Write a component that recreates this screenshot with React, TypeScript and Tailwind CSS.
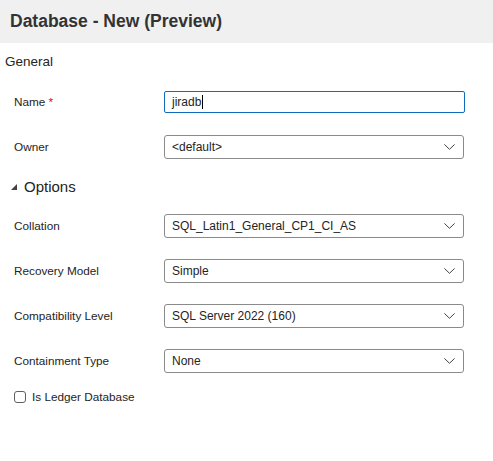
const Chevron = () => (
  <svg width="11" height="6" viewBox="0 0 11 6" className="shrink-0 text-[#424242]">
    <path d="M0.7 0.7l4.8 4.6 4.8-4.6" fill="none" stroke="currentColor" strokeWidth="1" strokeLinecap="round" strokeLinejoin="round" />
  </svg>
);

const Row = ({ label, children, className = "" }: { label: React.ReactNode; children: React.ReactNode; className?: string }) => (
  <div className={`flex items-center ${className}`}>
    <div className="w-[164px] shrink-0 pl-[14px] text-[11.75px] text-[#242424]">{label}</div>
    {children}
  </div>
);

const Select = ({ value }: { value: string }) => (
  <div className="flex h-[24px] w-[300px] items-center justify-between rounded-[3px] border border-[#8a8a8a] pl-[7px] pr-[8px] text-[12px] text-[#242424]">
    <span>{value}</span>
    <Chevron />
  </div>
);

export default function App() {
  return (
    <div className="h-[461px] w-[493px] bg-white font-['Liberation_Sans',Arial,sans-serif] text-[#242424]">
      <div className="flex h-[43px] items-center bg-[#f0f0f0] px-[10px] text-[17.5px] font-bold text-[#333]">
        Database - New (Preview)
      </div>

      <div className="mt-[9px] h-[20px] pl-[5px] text-[13.5px] leading-[20px]">General</div>

      <Row label={<span>Name <span className="text-[#c50f1f]">*</span></span>} className="mt-[19px] h-[22px]">
        <div className="flex h-[22px] w-[301px] items-center rounded-[2px] border border-[#0f6cbd] pl-[7px] text-[12px]">
          jiradb<span className="ml-px h-[14px] w-px bg-black" />
        </div>
      </Row>

      <Row label="Owner" className="mt-[22px] h-[24px]">
        <Select value="<default>" />
      </Row>

      <div className="mt-[18px] flex h-[20px] items-center gap-[7px] pl-[11px]">
        <svg width="6" height="6" viewBox="0 0 6 6">
          <path d="M6 0v6H0z" fill="#424242" />
        </svg>
        <span className="text-[15px]">Options</span>
      </div>

      <Row label="Collation" className="mt-[17px] h-[24px]">
        <Select value="SQL_Latin1_General_CP1_CI_AS" />
      </Row>
      <Row label="Recovery Model" className="mt-[21px] h-[24px]">
        <Select value="Simple" />
      </Row>
      <Row label="Compatibility Level" className="mt-[21px] h-[24px]">
        <Select value="SQL Server 2022 (160)" />
      </Row>
      <Row label="Containment Type" className="mt-[21px] h-[24px]">
        <Select value="None" />
      </Row>

      <div className="mt-[17px] flex h-[14px] items-center gap-[6px] pl-[14px] text-[11.75px]">
        <div className="h-[12px] w-[12px] rounded-[3px] border border-[#616161]" />
        <span>Is Ledger Database</span>
      </div>
    </div>
  );
}
